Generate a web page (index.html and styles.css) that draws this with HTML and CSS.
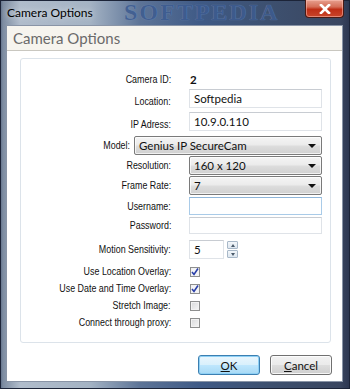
FILE: index.html
```html
<!DOCTYPE html>
<html lang="en">
<head>
    <meta charset="UTF-8">
    <title>Camera Options</title>
    <link rel="stylesheet" href="styles.css">
</head>
<body>
    <div class="window">
        <div class="titlebar">
            <span class="title-text">Camera Options</span>
            <span class="watermark">SOFTPEDIA</span>
            <button class="close-button">
                <svg width="12" height="10" viewBox="0 0 12 10">
                    <path d="M2 1 L10 9 M10 1 L2 9" stroke="#fff" stroke-width="2.6" stroke-linecap="square"/>
                </svg>
            </button>
        </div>
        <div class="client">
            <div class="header">Camera Options</div>
            <div class="group">
                <div class="row row-id">
                    <span class="label">Camera ID:</span>
                    <span class="value-bold">2</span>
                </div>
                <div class="row row-text">
                    <span class="label low">Location:</span>
                    <input class="field" type="text" value="Softpedia">
                </div>
                <div class="row row-text gap5">
                    <span class="label low">IP Adress:</span>
                    <input class="field" type="text" value="10.9.0.110">
                </div>
                <div class="row row-select row-model gap6">
                    <span class="label">Model:</span>
                    <div class="combo"><span>Genius IP SecureCam</span><i class="arrow"></i></div>
                </div>
                <div class="row row-select gap1">
                    <span class="label">Resolution:</span>
                    <div class="combo"><span>160 x 120</span><i class="arrow"></i></div>
                </div>
                <div class="row row-select gap1">
                    <span class="label">Frame Rate:</span>
                    <div class="combo"><span>7</span><i class="arrow"></i></div>
                </div>
                <div class="row row-text gap2">
                    <span class="label">Username:</span>
                    <input class="field focused" type="text" value="">
                </div>
                <div class="row row-pass gap2">
                    <span class="label">Password:</span>
                    <input class="field" type="password" value="">
                </div>
                <div class="row row-select gap6">
                    <span class="label">Motion Sensitivity:</span>
                    <div class="spin">
                        <input class="field spin-field" type="text" value="5">
                        <div class="spin-buttons">
                            <span class="spin-btn"><i class="tri-up"></i></span>
                            <span class="spin-btn"><i class="tri-down"></i></span>
                        </div>
                    </div>
                </div>
                <div class="checks">
                    <div class="row row-check">
                        <span class="label">Use Location Overlay:</span>
                        <span class="checkbox checked">
                            <svg width="8" height="8" viewBox="0 0 8 8"><path d="M1 4 L3 6.5 L7 0.5" fill="none" stroke="#2a3fa8" stroke-width="1.6"/></svg>
                        </span>
                    </div>
                    <div class="row row-check">
                        <span class="label">Use Date and Time Overlay:</span>
                        <span class="checkbox checked">
                            <svg width="8" height="8" viewBox="0 0 8 8"><path d="M1 4 L3 6.5 L7 0.5" fill="none" stroke="#2a3fa8" stroke-width="1.6"/></svg>
                        </span>
                    </div>
                    <div class="row row-check">
                        <span class="label">Stretch Image:</span>
                        <span class="checkbox"></span>
                    </div>
                    <div class="row row-check">
                        <span class="label">Connect through proxy:</span>
                        <span class="checkbox"></span>
                    </div>
                </div>
            </div>
            <div class="buttons">
                <button class="dlg-button default"><u>O</u>K</button>
                <button class="dlg-button"><u>C</u>ancel</button>
            </div>
        </div>
    </div>
</body>
</html>
```

FILE: styles.css
```css
body {
    margin: 0;
    width: 350px;
    height: 389px;
    overflow: hidden;
    background: #2e3a55;
}

.window {
    width: 350px;
    height: 389px;
    box-sizing: border-box;
    padding: 0 7px 7px 6px;
    display: flex;
    flex-direction: column;
    background:
        linear-gradient(90deg, #5b6b84 0, #7d8ca1 3px, #b0bccb 20px, #a4b3c4 90px, #5d7497 140px, #3f5a86 200px, #3d506f 270px, #3a4660 340px, #2c3650 350px);
    box-shadow: inset 0 0 0 1px #1c2438;
}

.titlebar {
    position: relative;
    height: 25px;
    display: flex;
    align-items: center;
    font-family: "Lato", sans-serif;
    font-size: 12px;
    color: #000;
}

.title-text {
    padding-left: 1px;
    margin-top: -1px;
    text-shadow: 0 0 6px rgba(255, 255, 255, 0.8);
    position: relative;
    z-index: 1;
}

.watermark {
    position: absolute;
    left: 118px;
    top: 0;
    font-family: "Liberation Serif", serif;
    font-weight: bold;
    font-size: 24px;
    line-height: 24px;
    letter-spacing: 2px;
    color: #3d5c90;
    text-shadow: 0 0 1px #7f9cc8;
    opacity: 0.85;
}

.close-button {
    position: absolute;
    right: -1px;
    top: 0;
    width: 39px;
    height: 18px;
    padding: 0;
    border: 1px solid #4a1a14;
    border-top: none;
    border-radius: 0 0 4px 4px;
    background: linear-gradient(#e7a08f 0%, #d56e58 40%, #bf2e16 55%, #c9452a 100%);
    box-shadow: inset 0 0 0 1px rgba(255, 200, 190, 0.5);
    display: flex;
    align-items: center;
    justify-content: center;
    z-index: 2;
}

.client {
    flex: 1;
    background: #fff;
    border: 1px solid #8994a6;
    display: flex;
    flex-direction: column;
}

.header {
    height: 24px;
    background: #f6f4ee;
    border-bottom: 1px solid #c9c7c0;
    font-family: "Lato", sans-serif;
    font-size: 15px;
    color: #6a6a6a;
    padding-left: 6px;
    line-height: 24px;
}

.group {
    margin: 7px 11px 0 13px;
    padding: 10px 0 11px 0;
    border: 1px solid #dce3ea;
    border-radius: 3px;
    display: flex;
    flex-direction: column;
}

.row {
    display: grid;
    grid-template-columns: 150px 133px;
    column-gap: 18px;
    align-items: center;
}

.label {
    justify-self: end;
    font-family: "Liberation Sans", sans-serif;
    font-size: 11px;
    line-height: 13px;
    white-space: nowrap;
    color: #111;
    transform: scaleX(0.81);
    transform-origin: right center;
}

.label.low {
    padding-top: 6px;
}

.row-id {
    height: 20px;
}

.row-text {
    height: 18px;
}

.row-pass {
    height: 17px;
}

.row-select {
    height: 19px;
}

.gap1 { margin-top: 1px; }
.gap2 { margin-top: 2px; }
.gap5 { margin-top: 5px; }
.gap6 { margin-top: 6px; }

.row-model {
    grid-template-columns: 109px 188px;
    column-gap: 4px;
}

.value-bold {
    font-family: "Lato", sans-serif;
    font-weight: bold;
    font-size: 11.5px;
    padding-left: 1px;
    color: #111;
}

.field {
    box-sizing: border-box;
    height: 100%;
    width: 100%;
    margin: 0;
    padding: 0 4px;
    border: 1px solid #dfe3e8;
    border-top-color: #c8ccd2;
    background: #fff;
    font-family: "Lato", sans-serif;
    font-size: 11.5px;
    color: #111;
    outline: none;
}

.field.focused {
    border-color: #a9cbe8;
    border-top-color: #8fb6da;
}

.combo {
    box-sizing: border-box;
    height: 100%;
    border: 1px solid #7a7a7a;
    border-radius: 2px;
    background: linear-gradient(#f4f4f4 0%, #ebebeb 48%, #dddddd 52%, #d0d0d0 100%);
    box-shadow: inset 0 0 0 1px rgba(255, 255, 255, 0.7);
    display: flex;
    align-items: center;
    justify-content: space-between;
    padding: 0 5px 0 4px;
    font-family: "Lato", sans-serif;
    font-size: 11.5px;
    color: #111;
}

.arrow {
    width: 0;
    height: 0;
    border-left: 4px solid transparent;
    border-right: 4px solid transparent;
    border-top: 4px solid #111;
}

.spin {
    display: flex;
    align-items: center;
    gap: 3px;
    height: 19px;
}

.spin-field {
    width: 35px;
    height: 19px;
}

.spin-buttons {
    display: flex;
    flex-direction: column;
    gap: 1px;
}

.spin-btn {
    width: 11px;
    height: 8px;
    box-sizing: border-box;
    border: 1px solid #a8b8c8;
    border-radius: 1px;
    background: linear-gradient(#f2f6fa, #dde6ef);
    display: flex;
    align-items: center;
    justify-content: center;
}

.tri-up,
.tri-down {
    width: 0;
    height: 0;
    border-left: 2.5px solid transparent;
    border-right: 2.5px solid transparent;
}

.tri-up {
    border-bottom: 3px solid #4a5a6a;
}

.tri-down {
    border-top: 3px solid #4a5a6a;
}

.checks {
    margin-top: 4px;
    display: flex;
    flex-direction: column;
}

.row-check {
    height: 17px;
    column-gap: 19px;
}

.checkbox {
    box-sizing: border-box;
    width: 10px;
    height: 10px;
    border: 1px solid #8e8f8f;
    background: linear-gradient(135deg, #d8d9db, #f6f6f6);
    box-shadow: inset 0 0 0 1px #f2f2f2;
    display: flex;
    align-items: center;
    justify-content: center;
}

.checkbox.checked {
    background: #f4f4f6;
}

.buttons {
    display: flex;
    justify-content: flex-end;
    gap: 10px;
    padding: 12px 10px 0 0;
}

.dlg-button {
    width: 62px;
    height: 20px;
    padding: 0;
    border: 1px solid #707070;
    border-radius: 3px;
    background: linear-gradient(#f2f2f2 0%, #ebebeb 48%, #dddddd 52%, #cfcfcf 100%);
    box-shadow: inset 0 0 0 1px rgba(255, 255, 255, 0.8);
    font-family: "Lato", sans-serif;
    font-size: 11.5px;
    color: #111;
}

.dlg-button.default {
    border-color: #3c7fb1;
    background: linear-gradient(#eaf6fd 0%, #d9f0fc 48%, #bee6fd 52%, #a7d9f5 100%);
    box-shadow: inset 0 0 0 1px #8ed0f5;
}
```
